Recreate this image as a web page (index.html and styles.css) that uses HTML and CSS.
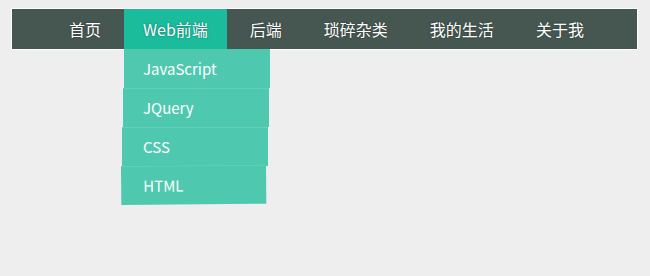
FILE: index.html
```html
<!DOCTYPE html>
<html lang="zh-CN">
<head>
<meta charset="utf-8">
<title>Nav</title>
<link rel="stylesheet" href="styles.css">
</head>
<body>
<nav class="nav">
  <ul class="menu">
    <li class="item"><a class="link" href="#">首页</a></li>
    <li class="item active"><a class="link" href="#">Web前端</a>
      <ul class="dropdown">
        <li class="sub s1"><a class="sublink" href="#">JavaScript</a></li>
        <li class="sub s2"><a class="sublink" href="#">JQuery</a></li>
        <li class="sub s3"><a class="sublink" href="#">CSS</a></li>
        <li class="sub s4"><a class="sublink" href="#">HTML</a></li>
      </ul>
    </li>
    <li class="item"><a class="link" href="#">后端</a></li>
    <li class="item"><a class="link" href="#">琐碎杂类</a></li>
    <li class="item"><a class="link" href="#">我的生活</a></li>
    <li class="item"><a class="link" href="#">关于我</a></li>
  </ul>
</nav>
</body>
</html>
```
FILE: styles.css
```css
html, body {
  margin: 0;
  padding: 0;
  background: #eeeeee;
  font-family: "Noto Sans CJK SC", "Noto Sans", sans-serif;
}
body {
  min-height: 276px;
  padding-top: 8px;
  box-sizing: border-box;
}
.nav {
  margin: 0 12px 0 11px;
  border: 1px solid #ffffff;
  background: #465751;
}
.menu {
  list-style: none;
  margin: 0;
  padding: 0 0 0 38px;
  display: flex;
  gap: 4px;
}
.item {
  position: relative;
}
.link {
  display: flex;
  align-items: center;
  height: 40px;
  padding: 0 19px;
  font-size: 16px;
  color: #ffffff;
  text-decoration: none;
  text-shadow: 0 0 2px rgba(0, 0, 0, 0.45);
}
.active > .link {
  background: #1abc9c;
}
.dropdown {
  position: absolute;
  z-index: 10;
  top: 40px;
  left: 0;
  width: 146px;
  list-style: none;
  margin: 0;
  padding: 0;
}
.sub {
  width: 146px;
  height: 39px;
  background: #4fc8b0;
}
.sublink {
  display: flex;
  align-items: center;
  height: 39px;
  padding-left: 19px;
  font-size: 15px;
  color: #ffffff;
  text-decoration: none;
}
.s2 {
  margin-left: -1px;
  box-shadow: inset 0 1px 0 rgba(255, 255, 255, 0.12);
}
.s2 .sublink { padding-left: 20px; }
.s3 {
  margin-left: -2px;
  box-shadow: inset 0 1px 0 rgba(255, 255, 255, 0.12);
}
.s3 .sublink { padding-left: 21px; }
.s4 {
  margin-left: -3px;
  width: 145px;
  box-shadow: inset 0 1px 0 rgba(255, 255, 255, 0.12);
  transform: rotate(-0.5deg);
  transform-origin: top left;
}
.s4 .sublink { padding-left: 22px; }
```
